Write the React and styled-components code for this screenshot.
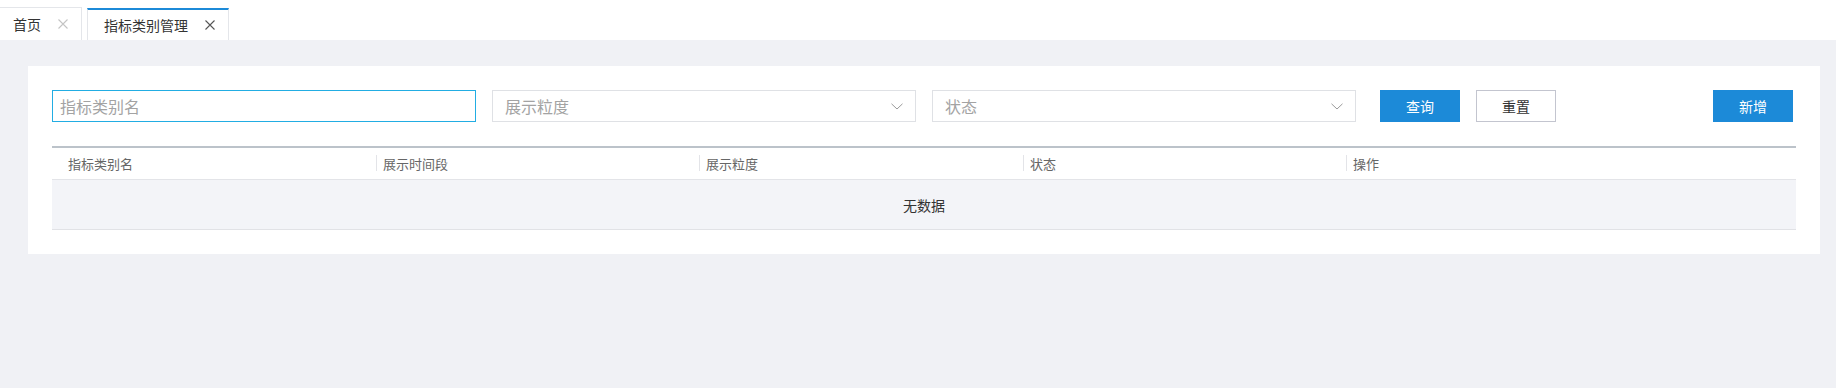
import React from 'react';
import styled, { createGlobalStyle } from 'styled-components';

const GlobalStyle = createGlobalStyle`
  html, body {
    margin: 0;
    padding: 0;
    background: #f0f1f5;
    font-family: "Noto Sans CJK SC", "Liberation Sans", sans-serif;
  }
  * { box-sizing: border-box; }
`;

const Page = styled.div`
  display: flex;
  flex-direction: column;
  height: 388px;
`;

const TabBar = styled.div`
  display: flex;
  align-items: flex-end;
  height: 40px;
  background: #fff;
`;

const Tab = styled.div`
  display: flex;
  align-items: center;
  height: ${({ active }) => (active ? '32px' : '33px')};
  margin-left: ${({ active }) => (active ? '5px' : '0')};
  padding: ${({ active }) => (active ? '0 13px 0 16px' : '0 13px 0 13px')};
  border-top: ${({ active }) => (active ? '2px solid #1c8ad8' : '1px solid #e4e6ea')};
  border-right: 1px solid #e4e6ea;
  border-left: ${({ active }) => (active ? '1px solid #e4e6ea' : 'none')};
  background: #fff;
  font-size: 14px;
  color: #333;
  gap: 17px;
`;

const Close = ({ dark }) => (
  <svg width="10" height="10" viewBox="0 0 10 10">
    <path d="M0.5 0.5 L9.5 9.5 M9.5 0.5 L0.5 9.5" stroke={dark ? '#555' : '#c4c4c4'} strokeWidth="1.1" />
  </svg>
);

const Main = styled.div`
  flex: 1;
  padding: 26px 16px 0 28px;
`;

const Card = styled.div`
  background: #fff;
  padding: 24px;
`;

const SearchRow = styled.div`
  display: flex;
  align-items: center;
  gap: 16px;
`;

const Field = styled.div`
  display: flex;
  align-items: center;
  justify-content: space-between;
  width: 424px;
  height: 32px;
  padding: 0 12px 0 ${({ focused }) => (focused ? '7px' : '12px')};
  border: 1px solid ${({ focused }) => (focused ? '#22ade3' : '#dfe1e5')};
  font-size: 16px;
  color: #a3a3a3;
  background: #fff;
`;

const Chevron = () => (
  <svg width="12" height="7" viewBox="0 0 12 7">
    <path d="M0.5 0.8 L6 6 L11.5 0.8" fill="none" stroke="#9a9a9a" strokeWidth="1" />
  </svg>
);

const Button = styled.button`
  width: 80px;
  height: 32px;
  margin-left: ${({ ml }) => ml || 0}px;
  margin-right: ${({ mr }) => mr || 0}px;
  border: 1px solid ${({ primary }) => (primary ? '#1c8ad8' : '#c3c5cf')};
  background: ${({ primary }) => (primary ? '#1c8ad8' : '#fff')};
  color: ${({ primary }) => (primary ? '#fff' : '#333')};
  font-family: inherit;
  font-size: 14px;
  padding: 0;
  cursor: pointer;
`;

const Spacer = styled.div`
  flex: 1;
`;

const Table = styled.div`
  margin-top: 24px;
  border-top: 2px solid #bcc3ca;
`;

const HeadRow = styled.div`
  display: grid;
  grid-template-columns: 324px 323px 324px 323px 1fr;
  height: 32px;
  border-bottom: 1px solid #e3e4e8;
`;

const HeadCell = styled.div`
  display: flex;
  align-items: center;
  padding-left: ${({ first }) => (first ? '16px' : '7px')};
  font-size: 13px;
  color: #666;
  position: relative;

  &::before {
    content: '';
    display: ${({ first }) => (first ? 'none' : 'block')};
    position: absolute;
    left: 0;
    top: 7px;
    height: 16px;
    width: 1px;
    background: #e3e4e8;
  }
`;

const EmptyRow = styled.div`
  display: flex;
  align-items: center;
  justify-content: center;
  height: 50px;
  background: #f3f4f8;
  border-bottom: 1px solid #e1e2e6;
  font-size: 14px;
  color: #333;
`;

const columns = ['指标类别名', '展示时间段', '展示粒度', '状态', '操作'];

export default function App() {
  return (
    <Page>
      <GlobalStyle />
      <TabBar>
        <Tab>
          首页
          <Close />
        </Tab>
        <Tab active>
          指标类别管理
          <Close dark />
        </Tab>
      </TabBar>
      <Main>
        <Card>
          <SearchRow>
            <Field focused>
              <span>指标类别名</span>
            </Field>
            <Field>
              <span>展示粒度</span>
              <Chevron />
            </Field>
            <Field>
              <span>状态</span>
              <Chevron />
            </Field>
            <Button primary ml={8}>查询</Button>
            <Button>重置</Button>
            <Spacer />
            <Button primary mr={3}>新增</Button>
          </SearchRow>
          <Table>
            <HeadRow>
              {columns.map((c, i) => (
                <HeadCell key={c} first={i === 0}>{c}</HeadCell>
              ))}
            </HeadRow>
            <EmptyRow>无数据</EmptyRow>
          </Table>
        </Card>
      </Main>
    </Page>
  );
}
